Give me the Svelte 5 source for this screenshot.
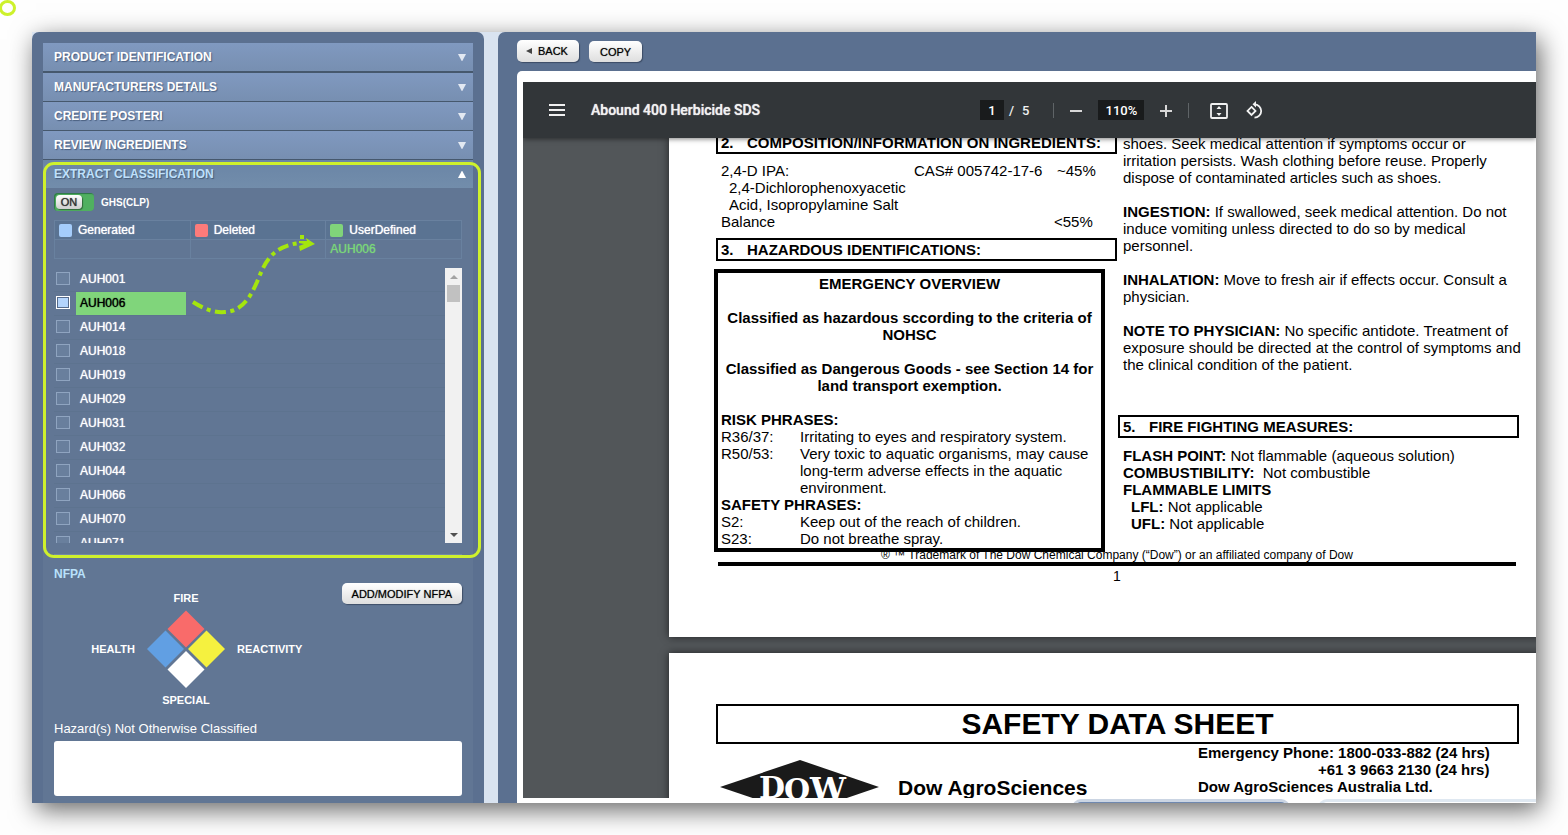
<script>
	let ghsOn = true;
	let selected = ['AUH006'];
	let hazards = '';
	let page = '1';
	let zoom = '110%';

	const closedSections = [
		'PRODUCT IDENTIFICATION',
		'MANUFACTURERS DETAILS',
		'CREDITE POSTERI',
		'REVIEW INGREDIENTS'
	];

	const legend = [
		{ name: 'Generated', type: 'generated' },
		{ name: 'Deleted', type: 'deleted' },
		{ name: 'UserDefined', type: 'user' }
	];

	const codes = [
		'AUH001',
		'AUH006',
		'AUH014',
		'AUH018',
		'AUH019',
		'AUH029',
		'AUH031',
		'AUH032',
		'AUH044',
		'AUH066',
		'AUH070',
		'AUH071'
	];
</script>

<div class="marker"></div>

<div class="window">
	<aside class="sidebar">
		<div class="accordion">
			{#each closedSections as section}
				<button class="section-head">
					<span>{section}</span>
					<svg width="8" height="8" viewBox="0 0 8 8"><path d="M0 1h8L4.300 8h-.6z" fill="#e3e9f2" /></svg>
				</button>
			{/each}

			<section class="open-section">
				<button class="section-head open">
					<span>EXTRACT CLASSIFICATION</span>
					<svg width="8" height="8" viewBox="0 0 8 8"><path d="M0 8h8L4.300 1h-.6z" fill="#fff" /></svg>
				</button>
				<div class="section-body">
					<div class="switch-row">
						<button
							class="switch"
							role="switch"
							aria-checked={ghsOn}
							aria-labelledby="ghs"
							on:click={() => (ghsOn = !ghsOn)}
						>
							<span class="knob">{ghsOn ? 'ON' : 'OFF'}</span>
						</button>
						<span class="switch-label" id="ghs">GHS(CLP)</span>
					</div>

					<table class="legend">
						<thead>
							<tr>
								{#each legend as item}
									<th><span class="head-cell"><i class="swatch {item.type}"></i>{item.name}</span></th>
								{/each}
							</tr>
						</thead>
						<tbody>
							<tr>
								<td></td>
								<td></td>
								<td>{selected.join(', ')}</td>
							</tr>
						</tbody>
					</table>

					<div class="list-box">
						<ul class="codes">
							{#each codes as code}
								<li>
									<label class:picked={selected.includes(code)}>
										<input type="checkbox" value={code} bind:group={selected} />
										<span>{code}</span>
									</label>
								</li>
							{/each}
						</ul>
						<div class="scrollbar">
							<button aria-label="Scroll up">
								<svg width="8" height="4" viewBox="0 0 8 4"><path d="M4 0l4 4H0z" fill="#a3a3a3" /></svg>
							</button>
							<div class="thumb"></div>
							<button class="down" aria-label="Scroll down">
								<svg width="8" height="4" viewBox="0 0 8 4"><path d="M4 4l4-4H0z" fill="#505050" /></svg>
							</button>
						</div>
					</div>
				</div>
				<div class="highlight"></div>
				<svg class="arrow" width="132" height="92" viewBox="0 0 132 92" fill="none" stroke="#a4e60d" stroke-width="4">
					<path
						d="M5 74C16 81 26 85 37 84C54 83 62 70 69 54C77 34 84 18 112 15"
						stroke-dasharray="11 4.5 4 4.5"
					/>
					<path d="M112 9h4" />
					<path d="M118 10l9 6-15 7-1-5 5-2-5-1 0-2 8 0z" fill="#a4e60d" stroke="none" />
				</svg>
			</section>

			<section class="nfpa">
				<h2>NFPA</h2>
				<div class="nfpa-row">
					<div class="nfpa-grid">
						<span class="fire">FIRE</span>
						<span class="health">HEALTH</span>
						<svg class="diamond" width="78" height="86" viewBox="0 0 78 86">
							<path d="M39 4.500l18.500 18.500L39 41.500 20.500 23z" fill="#f96b6a" />
							<path d="M18.500 24.500L37 43 18.500 61.500 0 43z" fill="#619fe3" />
							<path d="M59.500 24.500L78 43 59.500 61.500 41 43z" fill="#f5f13f" />
							<path d="M39 45l18.500 18.500L39 82 20.500 63.500z" fill="#fff" />
						</svg>
						<span class="reactivity">REACTIVITY</span>
						<span class="special">SPECIAL</span>
					</div>
					<button class="btn">ADD/MODIFY NFPA</button>
				</div>
				<label class="hazard-label" for="hazards">Hazard(s) Not Otherwise Classified</label>
				<textarea id="hazards" bind:value={hazards}></textarea>
			</section>
		</div>
	</aside>

	<main class="content">
		<div class="actions">
			<button class="btn back">
				<svg width="6" height="6" viewBox="0 0 6 6"><path d="M0 3l6-3v6z" fill="#444" /></svg>
				BACK
			</button>
			<button class="btn">COPY</button>
		</div>
		<div class="sheet">
			<div class="viewer">
				<header class="toolbar">
					<button class="icon" aria-label="Menu">
						<svg width="16" height="12" viewBox="0 0 16 12"><path d="M0 1h16M0 6h16M0 11h16" stroke="#f1f1f1" stroke-width="2" /></svg>
					</button>
					<h1>Abound 400 Herbicide SDS</h1>
					<div class="controls">
						<input class="page-input" aria-label="Page" bind:value={page} />
						<span class="slash">/</span>
						<span>5</span>
						<i class="divider"></i>
						<button class="icon" aria-label="Zoom out">
							<svg width="12" height="12" viewBox="0 0 12 12"><path d="M0 7h12" stroke="#d8d8d8" stroke-width="2" /></svg>
						</button>
						<input class="zoom-input" aria-label="Zoom" bind:value={zoom} />
						<button class="icon" aria-label="Zoom in">
							<svg width="12" height="14" viewBox="0 0 12 14"><path d="M0 8h12M6 2v12" stroke="#d8d8d8" stroke-width="2" /></svg>
						</button>
						<i class="divider"></i>
						<button class="icon fit" aria-label="Fit to page">
							<svg width="18" height="18" viewBox="0 0 18 18">
								<rect x="1" y="3" width="16" height="14" rx="1" fill="none" stroke="#f1f1f1" stroke-width="1.800" />
								<path d="M9 5l2.500 3h-5zM9 15l2.500-3h-5z" fill="#f1f1f1" />
							</svg>
						</button>
						<button class="icon" aria-label="Rotate">
							<svg width="18" height="18" viewBox="0 0 18 18" fill="none" stroke="#f1f1f1" stroke-width="1.800">
								<path d="M5.500 5.900l4 4-4 4-4-4z" />
								<path d="M8.500 3.300a6.700 6.700 0 1 1 0 13.400" />
								<path d="M10 0v6.500L6.500 3.300z" fill="#f1f1f1" stroke="none" />
							</svg>
						</button>
					</div>
				</header>

				<div class="pages">
					<article class="page first">
						<div class="columns">
							<div class="col-left">
								<h3><b>2.</b>COMPOSITION/INFORMATION ON INGREDIENTS:</h3>
								<div class="ingredients">
									<p>2,4-D IPA:</p>
									<p>CAS# 005742-17-6</p>
									<p>~45%</p>
									<p class="indent">2,4-Dichlorophenoxyacetic<br />Acid, Isopropylamine Salt</p>
									<p>Balance</p>
									<p></p>
									<p>&lt;55%</p>
								</div>
								<h3><b>3.</b>HAZARDOUS IDENTIFICATIONS:</h3>
								<div class="emergency">
									<div class="overview">
										EMERGENCY OVERVIEW<br /><br />
										Classified as hazardous sccording to the criteria of<br />NOHSC<br /><br />
										Classified as Dangerous Goods - see Section 14 for<br />land transport exemption.<br /><br />
									</div>
									<strong>RISK PHRASES:</strong>
									<dl>
										<dt>R36/37:</dt>
										<dd>Irritating to eyes and respiratory system.</dd>
										<dt>R50/53:</dt>
										<dd>Very toxic to aquatic organisms, may cause<br />long-term adverse effects in the aquatic<br />environment.</dd>
									</dl>
									<strong>SAFETY PHRASES:</strong>
									<dl>
										<dt>S2:</dt>
										<dd>Keep out of the reach of children.</dd>
										<dt>S23:</dt>
										<dd>Do not breathe spray.</dd>
									</dl>
								</div>
							</div>

							<div class="col-right">
								<p>shoes. Seek medical attention if symptoms occur or<br />irritation persists. Wash clothing before reuse. Properly<br />dispose of contaminated articles such as shoes.</p>
								<p><strong>INGESTION:</strong> If swallowed, seek medical attention. Do not<br />induce vomiting unless directed to do so by medical<br />personnel.</p>
								<p><strong>INHALATION:</strong> Move to fresh air if effects occur. Consult a<br />physician.</p>
								<p><strong>NOTE TO PHYSICIAN:</strong> No specific antidote. Treatment of<br />exposure should be directed at the control of symptoms and<br />the clinical condition of the patient.</p>
								<h3><b>5.</b>FIRE FIGHTING MEASURES:</h3>
								<p>
									<strong>FLASH POINT:</strong> Not flammable (aqueous solution)<br />
									<strong>COMBUSTIBILITY:</strong>&nbsp; Not combustible<br />
									<strong>FLAMMABLE LIMITS</strong><br />
									<span class="indent"><strong>LFL:</strong> Not applicable</span><br />
									<span class="indent"><strong>UFL:</strong> Not applicable</span>
								</p>
							</div>
						</div>
						<footer>
							<div class="trademark">® ™ Trademark of The Dow Chemical Company (“Dow”) or an affiliated company of Dow</div>
							<div class="page-number">1</div>
						</footer>
					</article>

					<article class="page second">
						<h2>SAFETY DATA SHEET</h2>
						<div class="letterhead">
							<svg class="logo" width="160" height="54" viewBox="0 0 160 54">
								<path d="M0 27L80 0l79 27-79 27z" fill="#1a1a1a" />
								<g fill="#fff" font-family="'DejaVu Serif', serif" font-weight="bold">
									<text x="39" y="38" font-size="30">D</text>
									<text x="64" y="40" font-size="30">O</text>
									<text x="90" y="40" font-size="32">W</text>
								</g>
							</svg>
							<div class="company">Dow AgroSciences</div>
							<div class="contact">
								Emergency Phone: 1800-033-882 (24 hrs)<br />
								<span>+61 3 9663 2130 (24 hrs)</span><br />
								Dow AgroSciences Australia Ltd.
							</div>
						</div>
					</article>
				</div>
			</div>
			<div class="peek">
				<div class="tab active"></div>
				<div class="tab"></div>
			</div>
		</div>
	</main>
</div>

<style>
	:global(body) {
		margin: 0;
		background: #fefefe;
		font-family: 'Liberation Sans', Arial, sans-serif;
		overflow: hidden;
	}
	h1,
	h2,
	h3,
	p,
	ul,
	dl,
	dd {
		margin: 0;
		padding: 0;
	}
	button,
	input,
	textarea {
		font-family: inherit;
		box-sizing: border-box;
		margin: 0;
	}
	button {
		cursor: pointer;
	}
	svg {
		display: block;
		flex-shrink: 0;
	}

	.marker {
		position: absolute;
		top: 0;
		left: -1px;
		width: 11px;
		height: 10px;
		border: 3px solid #cdf12b;
		border-radius: 50%;
	}
	.window {
		display: flex;
		gap: 14px;
		height: calc(100vh - 64px);
		margin: 32px;
		background: #d9e3f0;
		box-shadow: 4px 7px 24px rgba(0, 0, 0, 0.6);
	}

	/* left side */
	.sidebar {
		flex: 0 0 430px;
		padding: 11px 11px 0;
		background: #5b7090;
		border-radius: 7px 7px 0 0;
	}
	.accordion {
		height: 100%;
		background: #617694;
	}
	.section-head {
		display: flex;
		align-items: center;
		justify-content: space-between;
		width: 100%;
		height: 29px;
		padding: 0 7px 0 11px;
		border: none;
		border-bottom: 1px solid #46586d;
		background: linear-gradient(#8099c0, #778fb1);
		color: #fff;
		font-size: 12px;
		font-weight: bold;
		text-shadow: 1px 1px 1px rgba(40, 60, 90, 0.6);
	}
	.section-head:first-child {
		height: 30px;
		border-bottom-width: 2px;
	}
	.section-head.open {
		height: 28px;
		border: none;
		background: linear-gradient(#6a85a6, #728dab);
		color: #bfe0fb;
	}
	.open-section {
		position: relative;
	}
	.section-body {
		margin: 0 11px;
		padding: 5px 0 11px;
		border-bottom: 1px solid #7388a6;
	}
	.switch-row {
		display: flex;
		align-items: center;
		gap: 7px;
	}
	.switch {
		display: flex;
		width: 40px;
		height: 18px;
		padding: 2px;
		border: none;
		border-radius: 4px;
		background: #50b060;
		box-shadow: inset 1px 1px 1px #2d7548;
	}
	.knob {
		width: 26px;
		height: 14px;
		border-radius: 4px;
		background: linear-gradient(#fff, #cfcfcf);
		box-shadow: 1px 1px 1px rgba(0, 0, 0, 0.4);
		color: #333;
		font-size: 11px;
		line-height: 15px;
		text-shadow: 0 0 1px #333;
	}
	.switch-label {
		color: #fff;
		font-size: 10px;
		font-weight: bold;
	}
	.legend {
		width: 100%;
		height: 39px;
		margin-top: 9px;
		border-collapse: collapse;
		table-layout: fixed;
		font-size: 12px;
		line-height: 18px;
	}
	.legend th,
	.legend td {
		height: 18px;
		padding: 0 4px;
		border: 1px solid #69819f;
		text-align: left;
		font-weight: normal;
	}
	.legend th {
		background: #5a7392;
		color: #fff;
		text-shadow: 0 0 1px #fff;
	}
	.legend td {
		color: #7ad67a;
		text-shadow: 0 0 1px #7ad67a;
	}
	.head-cell {
		display: flex;
		align-items: center;
		gap: 6px;
	}
	.swatch {
		width: 13px;
		height: 13px;
		border-radius: 2px;
	}
	.swatch.generated {
		background: #a5cdfb;
	}
	.swatch.deleted {
		background: #fd7b7a;
	}
	.swatch.user {
		background: #80d47a;
	}
	.list-box {
		display: flex;
		height: 275px;
		margin-top: 9px;
		overflow: hidden;
	}
	.codes {
		flex: 1;
		list-style: none;
	}
	.codes li {
		height: 23px;
		border-bottom: 1px solid #5d738f;
	}
	.codes label {
		display: flex;
		align-items: flex-start;
		gap: 6px;
		height: 23px;
		padding-left: 2px;
		color: #fff;
		font-size: 12px;
		text-shadow: 0 0 1px #fff;
	}
	.codes span {
		width: 106px;
		padding-left: 4px;
		line-height: 23px;
	}
	.codes input {
		appearance: none;
		width: 14px;
		height: 13px;
		margin-top: 4px;
		border: 1px solid #8fa4c0;
		background: #697f9d;
	}
	.codes .picked input {
		border-color: #fff;
		background: #b3d4fc;
		box-shadow: inset 0 0 0 1px #566b8b;
	}
	.codes .picked span {
		background: #80d57b;
		color: #000;
		text-shadow: 0 0 1px #000;
	}
	.scrollbar {
		display: flex;
		flex-direction: column;
		align-items: center;
		width: 17px;
		background: #f1f1f1;
	}
	.scrollbar button {
		display: flex;
		align-items: center;
		justify-content: center;
		width: 17px;
		height: 17px;
		padding: 0;
		border: none;
		background: none;
	}
	.scrollbar .down {
		margin-top: auto;
	}
	.thumb {
		width: 13px;
		height: 17px;
		background: #c1c1c1;
	}
	.highlight {
		position: absolute;
		inset: 2px -8px -3px 0;
		border: 3px solid #cff12c;
		border-radius: 11px;
		pointer-events: none;
	}
	.arrow {
		position: absolute;
		top: 68px;
		left: 145px;
		pointer-events: none;
	}

	.nfpa {
		padding: 12px 11px 0;
		color: #fff;
	}
	.nfpa h2 {
		margin-bottom: 1px;
		color: #b9e1fb;
		font-size: 12px;
		line-height: 15px;
	}
	.nfpa-row {
		display: flex;
		align-items: flex-start;
		justify-content: space-between;
	}
	.nfpa-grid {
		display: grid;
		grid-template-columns: 81px 102px auto;
		grid-template-areas:
			'. fire .'
			'health diamond reactivity'
			'. special .';
		align-items: center;
		padding-top: 7px;
		font-size: 11px;
		font-weight: bold;
		line-height: 16px;
		text-align: center;
	}
	.fire {
		grid-area: fire;
	}
	.health {
		grid-area: health;
		text-align: right;
	}
	.diamond {
		grid-area: diamond;
		justify-self: center;
	}
	.reactivity {
		grid-area: reactivity;
	}
	.special {
		grid-area: special;
	}
	.hazard-label {
		display: block;
		margin: 13px 0 4px;
		font-size: 13px;
		line-height: 16px;
	}
	textarea {
		display: block;
		width: 100%;
		height: 55px;
		border: none;
		border-radius: 3px;
		background: #fff;
		resize: none;
	}
	.btn {
		display: flex;
		align-items: center;
		gap: 6px;
		height: 21px;
		padding: 0 10px;
		border: none;
		border-radius: 5px;
		background: linear-gradient(#fff, #dedede);
		box-shadow: 1px 1px 1px rgba(30, 40, 60, 0.5);
		color: #000;
		font-size: 11px;
		text-shadow: 0 0 1px rgba(0, 0, 0, 0.6);
		white-space: nowrap;
	}

	/* right side */
	.content {
		flex: 1;
		min-width: 0;
		display: flex;
		flex-direction: column;
		background: #5b7090;
		border-radius: 7px 0 0 0;
	}
	.actions {
		display: flex;
		align-items: flex-end;
		gap: 10px;
		padding: 8px 19px 9px;
	}
	.actions .btn {
		padding: 0 11px;
	}
	.actions .back {
		height: 22px;
		padding-left: 9px;
	}
	.sheet {
		position: relative;
		flex: 1;
		min-height: 0;
		display: flex;
		margin-left: 19px;
		padding: 11px 0 5px 6px;
		background: #fff;
		border-radius: 5px 0 0 0;
		overflow: hidden;
	}
	.viewer {
		flex: 1;
		min-width: 0;
		display: flex;
		flex-direction: column;
		background: #525659;
		overflow: hidden;
	}
	.toolbar {
		position: relative;
		z-index: 1;
		display: flex;
		align-items: center;
		flex: 0 0 56px;
		padding-left: 26px;
		background: #323639;
		box-shadow: 0 1px 5px rgba(0, 0, 0, 0.5);
		color: #f1f1f1;
		font-family: Roboto, sans-serif;
		font-size: 14px;
	}
	.toolbar h1 {
		flex: 0 0 389px;
		margin-left: 26px;
		font-size: 14px;
		font-weight: 500;
		text-shadow: 0 0 1px #f1f1f1;
	}
	.icon {
		padding: 0;
		border: none;
		background: none;
	}
	.controls {
		display: flex;
		align-items: center;
	}
	.controls span {
		font-size: 13px;
		font-weight: 500;
	}
	.controls .slash {
		margin: 0 8px 0 5px;
	}
	.controls input {
		height: 20px;
		padding: 0;
		border: none;
		background: #191b1c;
		color: #fff;
		font-size: 13px;
		font-weight: 500;
		text-align: center;
	}
	.page-input {
		width: 24px;
	}
	.zoom-input {
		width: 46px;
		margin: 0 16px;
	}
	.divider {
		width: 1px;
		height: 15px;
		margin: 0 16px;
		background: #5f6467;
	}
	.controls span + .divider {
		margin-left: 24px;
	}
	.controls .fit {
		margin: 0 18px 0 5px;
	}

	.pages {
		display: flex;
		flex-direction: column;
		gap: 16px;
		min-height: 0;
		padding-left: 146px;
	}
	.page {
		flex-shrink: 0;
		width: 896px;
		box-sizing: border-box;
		background: #fff;
		box-shadow: 0 0 8px rgba(0, 0, 0, 0.6);
		color: #000;
		font-size: 15px;
		line-height: 17px;
		white-space: nowrap;
	}
	.first {
		padding: 0 46px 52px 45px;
	}
	.columns {
		display: flex;
		margin-top: -7px;
	}
	.page h3 {
		display: flex;
		box-sizing: border-box;
		height: 23px;
		padding-left: 3px;
		border: 2px solid #000;
		font-size: 15px;
		line-height: 19px;
	}
	.page h3 b {
		width: 26px;
	}
	.col-left {
		width: 404px;
	}
	.col-left h3 {
		margin: 0 1px 0 2px;
	}
	.ingredients {
		display: grid;
		grid-template-columns: 193px 143px auto;
		padding: 8px 7px;
	}
	.ingredients p:last-child {
		margin-left: -3px;
	}
	.ingredients .indent {
		grid-column: 1 / 4;
	}
	.indent {
		padding-left: 8px;
	}
	.emergency {
		width: 377px;
		margin-top: 8px;
		padding: 2px 3px 1px;
		border: 4px solid #000;
	}
	.overview {
		font-weight: bold;
		text-align: center;
	}
	dl {
		display: grid;
		grid-template-columns: 79px auto;
	}
	.col-right {
		width: 401px;
		padding-top: 4px;
	}
	.col-right p {
		margin: 0 0 17px 5px;
	}
	.col-right h3 {
		margin: 42px 0 9px;
	}
	footer {
		margin: -3px 3px 0 4px;
		text-align: center;
	}
	.trademark {
		border-bottom: 4px solid #000;
		font-size: 12px;
		line-height: 13px;
	}
	.page-number {
		margin-top: 2px;
		font-size: 14px;
	}
	.second {
		padding: 51px 46px 51px 47px;
	}
	.second h2 {
		border: 2px solid #000;
		font-size: 30px;
		line-height: 36px;
		text-align: center;
	}
	.letterhead {
		display: flex;
		align-items: flex-start;
		font-weight: bold;
	}
	.logo {
		margin: 16px 18px 0 4px;
	}
	.company {
		width: 300px;
		margin-top: 32px;
		font-size: 21px;
		line-height: 24px;
	}
	.contact span {
		padding-left: 120px;
	}
	/* tops of the next tabs, showing at the lower edge */
	.peek {
		position: absolute;
		right: 0;
		bottom: 0;
		display: flex;
		gap: 28px;
		height: 4px;
		overflow: hidden;
	}
	.tab {
		box-sizing: border-box;
		width: 218px;
		height: 16px;
		border: 3px solid #dfe8f1;
		border-right: none;
		border-radius: 9px 0 0 0;
	}
	.tab.active {
		border: 3px solid #cbd5e3;
		border-radius: 9px 9px 0 0;
		background: #6f88af;
	}
</style>
